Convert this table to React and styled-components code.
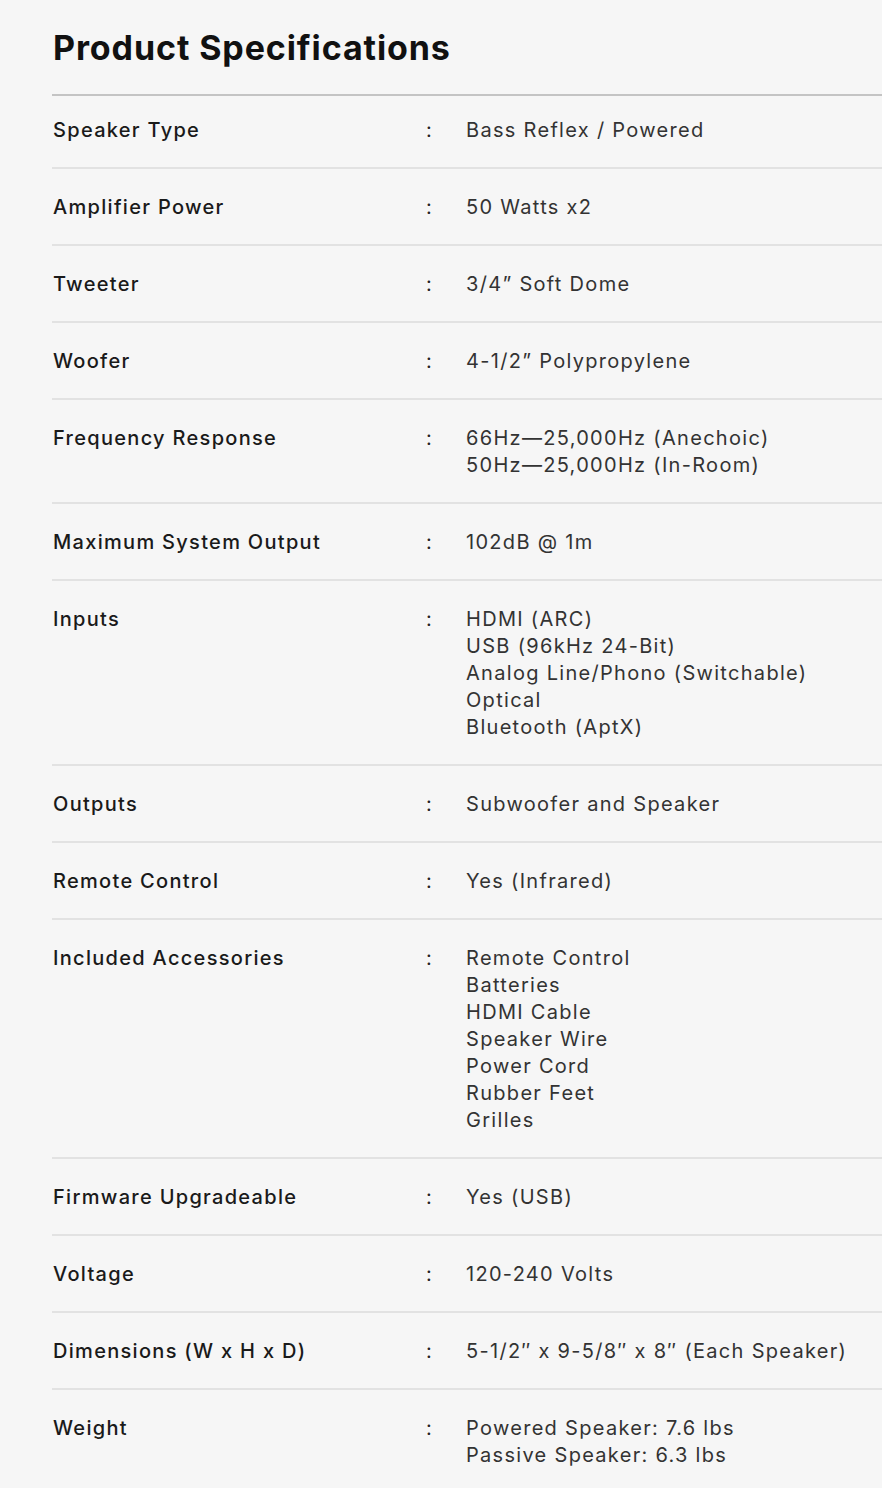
import React from 'react';
import styled, { createGlobalStyle } from 'styled-components';

const GlobalStyle = createGlobalStyle`
    html, body {
        margin: 0;
        padding: 0;
        background: #f6f6f6;
    }
    body {
        font-family: 'Inter', 'Open Sans', sans-serif;
        color: #1c1c1c;
    }
`

const Section = styled.section`
    padding: 28px 0 20px 52px;
    overflow: hidden;
`

const Title = styled.h2`
    margin: 0 0 26px 1px;
    font-size: 34px;
    font-weight: 700;
    letter-spacing: 0.9px;
    line-height: 40px;
    color: #111;
`

const Table = styled.div`
    border-top: 2px solid #c4c4c4;
`

const Row = styled.div`
    display: grid;
    grid-template-columns: 374px 40px 1fr;
    padding: ${props => (props.first ? '21px' : '25px')} 0 23px;
    border-bottom: 2px solid #e2e2e2;
    font-size: 20px;
    letter-spacing: 1.3px;
    line-height: 27px;
    &:last-child {
        border-bottom: none;
    }
`

const Label = styled.div`
    padding-left: 1px;
    font-weight: 500;
    color: #1a1a1a;
`

const Colon = styled.div`
    color: #222;
`

const Values = styled.div`
    display: flex;
    flex-direction: column;
    color: #333;
`

const specs = [
    ['Speaker Type', ['Bass Reflex / Powered']],
    ['Amplifier Power', ['50 Watts x2']],
    ['Tweeter', ['3/4\u201D Soft Dome']],
    ['Woofer', ['4-1/2\u201D Polypropylene']],
    ['Frequency Response', ['66Hz\u201425,000Hz (Anechoic)', '50Hz\u201425,000Hz (In-Room)']],
    ['Maximum System Output', ['102dB @ 1m']],
    ['Inputs', ['HDMI (ARC)', 'USB (96kHz 24-Bit)', 'Analog Line/Phono (Switchable)', 'Optical', 'Bluetooth (AptX)']],
    ['Outputs', ['Subwoofer and Speaker']],
    ['Remote Control', ['Yes (Infrared)']],
    ['Included Accessories', ['Remote Control', 'Batteries', 'HDMI Cable', 'Speaker Wire', 'Power Cord', 'Rubber Feet', 'Grilles']],
    ['Firmware Upgradeable', ['Yes (USB)']],
    ['Voltage', ['120-240 Volts']],
    ['Dimensions (W x H x D)', ['5-1/2\u2033 x 9-5/8\u2033 x 8\u2033 (Each Speaker)']],
    ['Weight', ['Powered Speaker: 7.6 lbs', 'Passive Speaker: 6.3 lbs']],
];

export default function App() {
    return (
        <>
            <GlobalStyle />
            <Section>
                <Title>Product Specifications</Title>
                <Table>
                    {specs.map(([label, values], i) => (
                        <Row key={label} first={i === 0}>
                            <Label>{label}</Label>
                            <Colon>:</Colon>
                            <Values>
                                {values.map(v => <span key={v}>{v}</span>)}
                            </Values>
                        </Row>
                    ))}
                </Table>
            </Section>
        </>
    )
}
